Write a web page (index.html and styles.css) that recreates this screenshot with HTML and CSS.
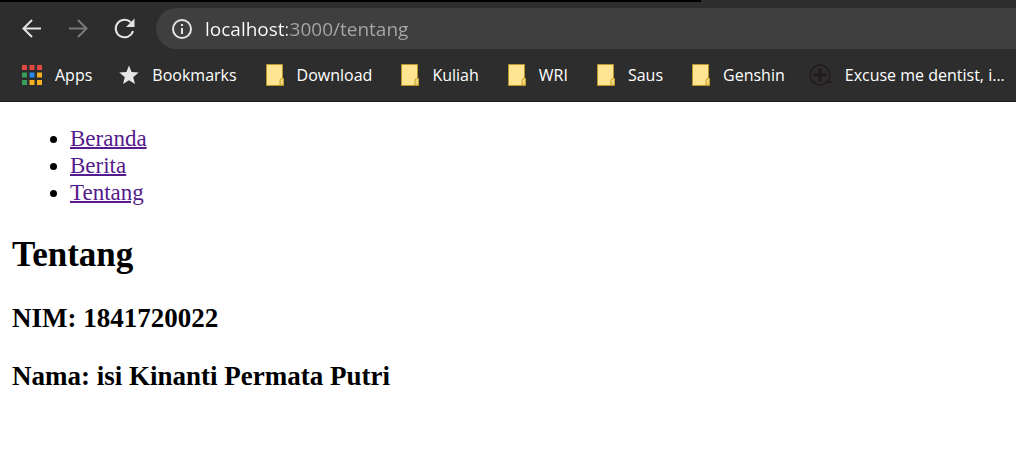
FILE: index.html
```html
<!DOCTYPE html>
<html lang="id">
<head>
<meta charset="utf-8">
<title>Tentang</title>
<link rel="stylesheet" href="styles.css">
</head>
<body>
<svg class="defs" aria-hidden="true">
  <symbol id="folder" viewBox="0 0 20 24">
    <path d="M2.500 1.500h16v14h1v7h-17z" fill="#ffe591" stroke="#b8962b"/>
    <path d="M16 22v-4.500q0-2 2-2h1.500V22z" fill="#f5d97c" stroke="#c4a02f"/>
  </symbol>
</svg>
<header class="browser">
  <div class="tab-edge"></div>
  <div class="toolbar">
    <button class="nav" aria-label="Back"><svg viewBox="0 0 24 24"><path d="M21 11.500H4M12 3 3.500 11.500l8.500 8.500"/></svg></button>
    <button class="nav" aria-label="Forward" disabled><svg viewBox="0 0 24 24"><path d="M3 11.500h17M12 3l8.500 8.500-8.500 8.500"/></svg></button>
    <button class="nav" aria-label="Reload"><svg viewBox="0 0 24 24"><path d="M18.800 5.300A8.800 8.800 0 1 0 21 14"/><path class="solid" d="M22.500 1.500v8.500H14z"/></svg></button>
    <div class="address">
      <button class="info" aria-label="Site information"><svg viewBox="0 0 24 24"><circle cx="12" cy="12" r="9"/><path d="M12 11v6M12 7v2"/></svg></button>
      <input class="url" type="text" aria-label="Address" value="localhost:3000/tentang" spellcheck="false">
    </div>
  </div>
  <nav class="bookmarks" aria-label="Bookmarks">
    <a class="mark" href="#apps"><svg class="mark-icon" viewBox="0 0 20 24">
      <path fill="#e04a43" d="M0 2h5v5H0zM7.500 2h5v5h-5zM15 2h5v5h-5z"/>
      <path fill="#3a9d5b" d="M0 9.500h5v5H0zM0 17h5v5H0z"/>
      <path fill="#2589ee" d="M7.500 9.500h5v5h-5z"/>
      <path fill="#f4b020" d="M15 9.500h5v5h-5zM7.500 17h5v5h-5zM15 17h5v5h-5z"/>
    </svg><span>Apps</span></a>
    <a class="mark" href="#bookmarks"><svg class="mark-icon" viewBox="0 0 20 24"><path fill="#e6e6e6" d="M10 2.500l2.600 6.600 7.100.5-5.500 4.600 1.800 6.900-6-3.800-6 3.800 1.800-6.900L.3 9.600l7.100-.5z"/></svg><span>Bookmarks</span></a>
    <a class="mark" href="#download"><svg class="mark-icon"><use href="#folder"/></svg><span>Download</span></a>
    <a class="mark" href="#kuliah"><svg class="mark-icon"><use href="#folder"/></svg><span>Kuliah</span></a>
    <a class="mark" href="#wri"><svg class="mark-icon"><use href="#folder"/></svg><span>WRI</span></a>
    <a class="mark" href="#saus"><svg class="mark-icon"><use href="#folder"/></svg><span>Saus</span></a>
    <a class="mark" href="#genshin"><svg class="mark-icon"><use href="#folder"/></svg><span>Genshin</span></a>
    <a class="mark" href="#dentist"><svg class="mark-icon spill" viewBox="0 0 20 24"><g fill="none" stroke="#231b1b"><circle cx="8" cy="12" r="10" stroke-width="1.500"/><path d="M8 5.500v13M1.500 12h13" stroke-width="3"/><path d="M14 19h6" stroke-width="1.500"/></g></svg><span>Excuse me dentist, i...</span></a>
  </nav>
</header>
<main class="page">
  <ul class="menu">
    <li><a class="link" href="#beranda">Beranda</a></li>
    <li><a class="link" href="#berita">Berita</a></li>
    <li><a class="link" href="#tentang">Tentang</a></li>
  </ul>
  <h2 class="title">Tentang</h2>
  <h3 class="detail">NIM: 1841720022</h3>
  <h3 class="detail">Nama: isi Kinanti Permata Putri</h3>
</main>
</body>
</html>
```

FILE: styles.css
```css
* {
  box-sizing: border-box;
}

body {
  margin: 0;
  background: #fff;
  color: #000;
}

.defs {
  position: absolute;
  width: 0;
  height: 0;
}

.browser {
  background: #2d2d2d;
  border-bottom: 1px solid #1c1c1c;
  font-family: "Open Sans", "Noto Sans", sans-serif;
  overflow: hidden;
}

.tab-edge {
  width: 69%;
  height: 2px;
  background: #000;
}

.toolbar {
  display: flex;
  align-items: center;
  padding: 6px 0 0 20px;
}

.nav,
.info {
  flex: none;
  padding: 0;
  border: 0;
  background: none;
  color: #e4e4e4;
}

.nav {
  width: 24px;
  height: 24px;
  margin-right: 22px;
}

.nav:disabled {
  color: #797979;
}

.nav svg,
.info svg {
  display: block;
  width: 24px;
  height: 24px;
  fill: none;
  stroke: currentColor;
  stroke-width: 2;
}

.nav .solid {
  fill: currentColor;
  stroke: none;
}

.address {
  flex: 1;
  display: flex;
  align-items: center;
  gap: 11px;
  height: 41px;
  padding-left: 14px;
  margin-left: -2px;
  border-radius: 21px 0 0 21px;
  background: #3f3f3f;
}

.url {
  flex: 1;
  min-width: 0;
  padding: 0;
  border: 0;
  outline: 0;
  font: 19px/28px "Open Sans", "Noto Sans", sans-serif;
  color: transparent;
  caret-color: #fff;
  background: linear-gradient(to right, #fff 82px, #a8a8a8 82px);
  background-clip: text;
  -webkit-background-clip: text;
}

.bookmarks {
  display: flex;
  align-items: center;
  gap: 27px;
  height: 52px;
  padding: 0 0 1px 22px;
}

.mark {
  display: flex;
  align-items: center;
  gap: 13px;
  color: #fff;
  font-size: 16px;
  line-height: 24px;
  text-decoration: none;
  white-space: nowrap;
}

.mark-icon {
  flex: none;
  width: 20px;
  height: 24px;
}

.spill {
  overflow: visible;
}

.page {
  padding: 23px 12px;
  font-family: "Liberation Serif", serif;
  font-size: 23px;
  line-height: 27px;
}

.menu {
  margin: 0;
  padding-left: 58px;
}

.link {
  color: #551a8b;
  text-decoration-thickness: 2px;
}

.title {
  margin: 29px 0 28px;
  font-size: 35px;
  line-height: 40px;
}

.detail {
  margin: 27px 0;
  font-size: 27px;
  line-height: 31px;
}
```
